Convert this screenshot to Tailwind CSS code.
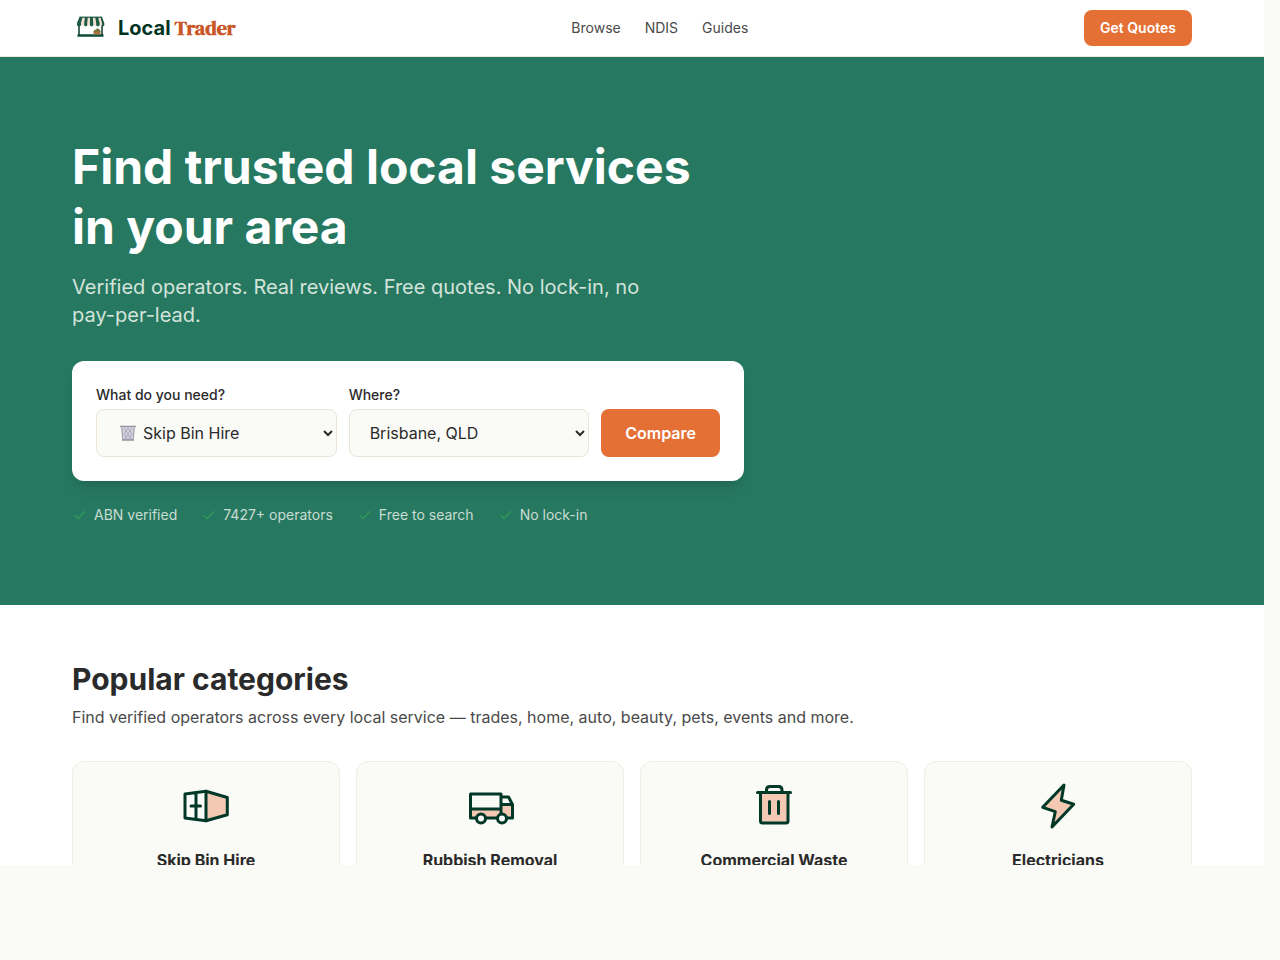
<!DOCTYPE html>
<html lang="en">
<head>
  <meta charset="UTF-8">
  <meta name="viewport" content="width=device-width, initial-scale=1.0">
  <title>Local Trader</title>
  <script src="https://cdn.jsdelivr.net/npm/@tailwindcss/browser@4"></script>
</head>
<body class="h-screen overflow-hidden bg-[#fafaf6] pr-4 pb-[95px] font-['Inter',sans-serif] text-[#2a2a2a]">
  <div class="h-full overflow-hidden bg-white">

    <!-- Header -->
    <header class="border-b border-[#ece8dc] bg-white">
      <div class="mx-auto flex h-14 max-w-6xl items-center justify-between px-4">
        <a href="#" class="flex items-center gap-2.5">
          <svg class="size-9" viewBox="0 0 36 36" aria-hidden="true">
            <path d="M7 15v11M30 15v11" stroke="#0b3d2e" stroke-width="1.500"/>
            <path d="M8 7h21.500l2.500 6v2.500H5V13z" fill="#f3dfd0"/>
            <path d="M7.500 7h3L9 13v2.500l-2 1-2-1V13zM13 7h2.800l-.6 6v2.500l-1.500 1-1.500-1V13zM18 7h2.800l.4 6v2.500l-1.700 1-1.500-1zM23.200 7H26l1.600 6v2.500l-1.800 1-1.600-1V13zM28.300 7h1.700l2.300 6v2.500l-1.300 1-1-1V13z" fill="#1b5b45"/>
            <path d="M7.500 7.200h22.500" stroke="#1b5b45" stroke-width="1.200"/>
            <path d="M5.500 25.500h26" stroke="#0b4a37" stroke-width="2.500"/>
            <path d="M21.500 21h7v3.500h-7z" fill="#a9713d"/>
            <path d="M21.500 21.500q1-2.500 2.500-1.500l1-2 1 1 1-.5.500 1.500q1 0 1 1.500z" fill="#6b7038"/>
          </svg>
          <span class="flex items-baseline gap-1 text-xl font-bold">
            <span class="text-[#003322]">Local</span>
            <span class="font-['DM_Serif_Display','Liberation_Serif',serif] text-[#c8582a]">Trader</span>
          </span>
        </a>
        <nav class="flex gap-6 text-sm text-[#4a4a4a]">
          <a href="#" class="hover:text-[#277860]">Browse</a>
          <a href="#" class="hover:text-[#277860]">NDIS</a>
          <a href="#" class="hover:text-[#277860]">Guides</a>
        </nav>
        <a href="#" class="rounded-lg bg-[#e57035] px-4 py-2 text-sm font-semibold text-white hover:bg-[#c8582a]">Get Quotes</a>
      </div>
    </header>

    <!-- Hero -->
    <section class="bg-[#277860] py-20">
      <div class="mx-auto max-w-6xl px-4">
        <div class="max-w-2xl">
          <h1 class="mb-4 text-5xl leading-[60px] font-bold text-white">Find trusted local services in your area</h1>
          <p class="mb-8 max-w-xl text-xl text-[#d4e4dc]">Verified operators. Real reviews. Free quotes. No lock-in, no pay-per-lead.</p>

          <form class="flex items-end gap-3 rounded-xl bg-white p-6 shadow-lg">
            <div class="min-w-0 flex-1">
              <label for="service" class="mb-1 block text-sm font-medium">What do you need?</label>
              <div class="relative">
                <select id="service" class="h-12 w-full rounded-lg border border-[#ece4d8] bg-[#fafaf6] pr-4 pl-[42px]">
                  <option>Skip Bin Hire</option>
                </select>
                <svg class="pointer-events-none absolute inset-y-0 left-6 my-auto size-4" viewBox="0 0 16 16" aria-hidden="true">
                  <path d="M1 2.500h14L13.500 15h-11z" fill="#d3d0de"/>
                  <path d="M4 3l2 3-2 3 2 3-1.500 3M8 3 6 6l2 3-2 3 2 3M8 3l2 3-2 3 2 3-2 3M12 3l-2 3 2 3-2 3 1.500 3" fill="none" stroke="#aaa5ba" stroke-width=".8"/>
                  <path d="M1.800 3 2.800 15M14.200 3l-1 12" stroke="#a29db3"/>
                  <path d="M0 1.500h16M2 15h12" stroke="#96919f" stroke-width="1.500"/>
                </svg>
              </div>
            </div>
            <div class="min-w-0 flex-1">
              <label for="place" class="mb-1 block text-sm font-medium">Where?</label>
              <select id="place" class="h-12 w-full rounded-lg border border-[#ece4d8] bg-[#fafaf6] px-4">
                <option>Brisbane, QLD</option>
              </select>
            </div>
            <button type="button" class="h-12 rounded-lg bg-[#e57035] px-6 font-semibold text-white hover:bg-[#c8582a]">Compare</button>
          </form>

          <ul class="mt-6 flex gap-6 text-sm text-[#c9dcd2]">
            <li class="flex items-center gap-1.5">
              <svg class="size-4 text-[#2f9a5c]" viewBox="0 0 16 16" fill="none" stroke="currentColor" stroke-width="1.300" stroke-linecap="round" stroke-linejoin="round"><path d="M3 8.500 6 11.500 13 4.500"/></svg>
              ABN verified
            </li>
            <li class="flex items-center gap-1.5">
              <svg class="size-4 text-[#2f9a5c]" viewBox="0 0 16 16" fill="none" stroke="currentColor" stroke-width="1.300" stroke-linecap="round" stroke-linejoin="round"><path d="M3 8.500 6 11.500 13 4.500"/></svg>
              7427+ operators
            </li>
            <li class="flex items-center gap-1.5">
              <svg class="size-4 text-[#2f9a5c]" viewBox="0 0 16 16" fill="none" stroke="currentColor" stroke-width="1.300" stroke-linecap="round" stroke-linejoin="round"><path d="M3 8.500 6 11.500 13 4.500"/></svg>
              Free to search
            </li>
            <li class="flex items-center gap-1.5">
              <svg class="size-4 text-[#2f9a5c]" viewBox="0 0 16 16" fill="none" stroke="currentColor" stroke-width="1.300" stroke-linecap="round" stroke-linejoin="round"><path d="M3 8.500 6 11.500 13 4.500"/></svg>
              No lock-in
            </li>
          </ul>
        </div>
      </div>
    </section>

    <!-- Categories -->
    <section class="py-14">
      <div class="mx-auto max-w-6xl px-4">
        <h2 class="mb-2 text-3xl font-bold">Popular categories</h2>
        <p class="mb-8 text-[#4a4a4a]">Find verified operators across every local service — trades, home, auto, beauty, pets, events and more.</p>

        <div class="grid grid-cols-4 gap-4">
          <a href="#" class="flex flex-col items-center gap-[18px] rounded-xl border border-[#f0ede3] bg-[#fafaf6] p-5">
            <svg class="size-12" viewBox="0 0 48 48" fill="none" stroke="#003828" stroke-width="3" stroke-linecap="round" stroke-linejoin="round">
              <path d="M24 9.200 45.300 15.500v17.300L24 38.800z" fill="#f4c9b3"/>
              <path d="M24 9.200 3 12v24l21 2.800M14 10.500v27M9 24h9.500"/>
            </svg>
            <h3 class="font-bold">Skip Bin Hire</h3>
          </a>
          <a href="#" class="flex flex-col items-center gap-[18px] rounded-xl border border-[#f0ede3] bg-[#fafaf6] p-5">
            <svg class="size-12" viewBox="0 0 48 48" fill="none" stroke="#003828" stroke-width="3" stroke-linecap="round" stroke-linejoin="round">
              <path d="M4.500 27H35v-4.500h11.500v13.500h-42z" fill="#f4c9b3" stroke="none"/>
              <path d="M4.500 12H35v24H4.500zM4.500 27H35M35 15h7.500l4 7.500V36H35M35 22.500h11.500"/>
              <circle cx="15" cy="36.500" r="4.500" fill="#fafaf6"/>
              <circle cx="36" cy="36.500" r="4.500" fill="#fafaf6"/>
            </svg>
            <h3 class="font-bold">Rubbish Removal</h3>
          </a>
          <a href="#" class="flex flex-col items-center gap-[18px] rounded-xl border border-[#f0ede3] bg-[#fafaf6] p-5">
            <svg class="size-12" viewBox="0 0 48 48" fill="none" stroke="#003828" stroke-width="3" stroke-linecap="round" stroke-linejoin="round">
              <path d="M10.500 10.500h27.500V39a2 2 0 0 1-2 2H12.500a2 2 0 0 1-2-2z" fill="#f4c9b3"/>
              <path d="M7.500 10.500h33M16.500 10.500V8q0-3.500 3.500-3.500h8.500q3.500 0 3.500 3.500v2.500M19.500 19.500v12M28.500 19.500v12"/>
            </svg>
            <h3 class="font-bold">Commercial Waste</h3>
          </a>
          <a href="#" class="flex flex-col items-center gap-[18px] rounded-xl border border-[#f0ede3] bg-[#fafaf6] p-5">
            <svg class="size-12" viewBox="0 0 48 48" fill="none" stroke="#003828" stroke-width="3" stroke-linecap="round" stroke-linejoin="round">
              <path d="M30 3 27.300 18.300 39.700 22.300 18 45 21.300 29.700 8.700 25.300z" fill="#f4c9b3"/>
            </svg>
            <h3 class="font-bold">Electricians</h3>
          </a>
        </div>
      </div>
    </section>
  </div>
</body>
</html>
